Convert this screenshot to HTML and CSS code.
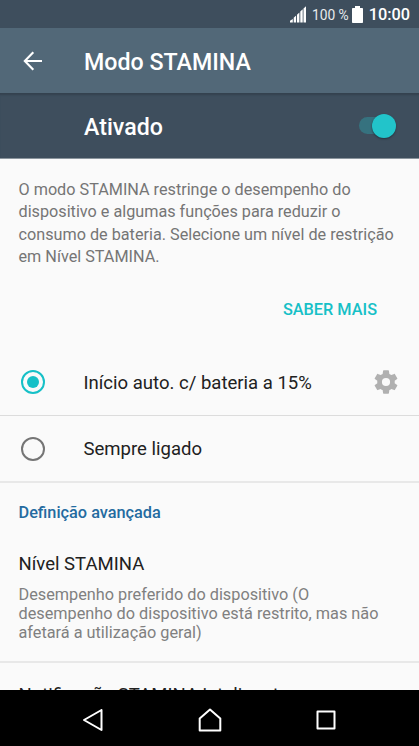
FILE: index.html
```html
<!DOCTYPE html>
<html lang="pt">
<head>
<meta charset="utf-8">
<title>Modo STAMINA</title>
<link rel="stylesheet" href="styles.css">
</head>
<body>
<div class="screen">
  <header class="status">
    <svg class="signal" width="17" height="17" viewBox="0 0 17 17" fill="#fff"><path d="M0 16.500v-1.700l2.800-1.800v3.500zM3.700 16.500v-4.700l2.400-2.300v7zM7 16.500V8.700l2.400-2.300v10.100zM10.300 16.500v-11l2.400-2.300v13.300zM13.500 16.500V2.500L16 .2v16.300z"/></svg>
    <span class="percent">100 %</span>
    <svg class="battery" width="11" height="17" viewBox="0 0 11 17" fill="#fff"><path d="M3 0h5v2h2.200q.8 0 .8.8v13.400q0 .8-.8.8H.8q-.8 0-.8-.8V2.800q0-.8.8-.8H3z"/></svg>
    <span class="clock">10:00</span>
  </header>
  <div class="appbar">
    <svg class="back" width="20" height="20" viewBox="0 0 20 20" fill="none" stroke="#fff" stroke-width="2.1"><path d="M19 10H2M10.300 1.300L1.800 10l8.500 8.700"/></svg>
    <h1 class="title">Modo STAMINA</h1>
  </div>
  <div class="switchbar">
    <span class="title">Ativado</span>
    <span class="switch"><span class="thumb"></span></span>
  </div>
  <main class="content">
    <p class="intro">O modo STAMINA restringe o desempenho do<br>dispositivo e algumas funções para reduzir o<br>consumo de bateria. Selecione um nível de restrição<br>em Nível STAMINA.</p>
    <div class="actions"><a class="more">SABER MAIS</a></div>
    <div class="option">
      <span class="radio checked"></span>
      <span class="label">Início auto. c/ bateria a 15%</span>
      <svg class="gear" width="28" height="28" viewBox="0 0 24 24" fill="#b0b0b0"><path d="M19.430 12.980c.04-.32.07-.64.07-.98s-.03-.66-.07-.98l2.110-1.650c.19-.15.24-.42.12-.64l-2-3.460c-.12-.22-.39-.3-.61-.22l-2.490 1c-.52-.4-1.080-.73-1.690-.98l-.38-2.650C14.460 2.180 14.250 2 14 2h-4c-.25 0-.46.18-.49.42l-.38 2.650c-.61.25-1.170.59-1.690.98l-2.490-1c-.23-.09-.49 0-.61.22l-2 3.460c-.13.22-.07.49.12.64l2.110 1.650c-.04.32-.07.65-.07.98s.03.66.07.98l-2.110 1.650c-.19.15-.24.42-.12.64l2 3.460c.12.22.39.3.61.22l2.490-1c.52.4 1.080.73 1.690.98l.38 2.650c.03.24.24.42.49.42h4c.25 0 .46-.18.49-.42l.38-2.650c.61-.25 1.170-.59 1.690-.98l2.490 1c.23.09.49 0 .61-.22l2-3.460c.12-.22.07-.49-.12-.64zM12 15.500a3.500 3.500 0 1 1 0-7 3.500 3.500 0 0 1 0 7z"/></svg>
    </div>
    <div class="option last">
      <span class="radio"></span>
      <span class="label">Sempre ligado</span>
    </div>
    <h2 class="section">Definição avançada</h2>
    <div class="setting">
      <div class="label">Nível STAMINA</div>
      <p class="summary">Desempenho preferido do dispositivo (O<br>desempenho do dispositivo está restrito, mas não<br>afetará a utilização geral)</p>
    </div>
    <div class="setting next">
      <div class="label">Notificação STAMINA inteligente</div>
    </div>
  </main>
  <nav class="navbar">
    <svg width="20" height="22" viewBox="0 0 20 22" fill="none" stroke="#fff" stroke-width="2" stroke-linejoin="round"><path d="M18.500 1v20L1 11z"/></svg>
    <svg width="24" height="24" viewBox="0 0 24 24" fill="none" stroke="#fff" stroke-width="2" stroke-linejoin="round"><path d="M1.700 22.500V10.500L12 1.500l10.300 9v12z"/></svg>
    <svg width="20" height="20" viewBox="0 0 20 20" fill="none" stroke="#fff" stroke-width="2" stroke-linejoin="round"><path d="M1.500 1.500h17v17h-17z"/></svg>
  </nav>
</div>
</body>
</html>
```
FILE: styles.css
```css
* { box-sizing: border-box; }
body { margin: 0; font-family: Roboto, "Liberation Sans", sans-serif; color: #212121; }
h1, h2, p { margin: 0; }
svg { display: block; flex: none; }
.screen { width: 419px; height: 746px; display: flex; flex-direction: column; overflow: hidden; background: #fafafa; }
.status { flex: none; height: 28px; background: #3e4e5d; color: #fff; display: flex; align-items: center; justify-content: flex-end; padding-right: 9px; }
.signal { margin-right: 5px; }
.percent { font-size: 13.800px; color: #e8ebed; margin-right: 3px; padding-top: 1px; }
.battery { margin-right: 6px; }
.clock { font-size: 16.300px; font-weight: 500; padding-top: 1px; }
.appbar { flex: none; height: 65px; background: #526878; display: flex; align-items: center; padding-left: 23px; }
.back { margin-right: 41px; }
.title { font-size: 23.200px; font-weight: 500; line-height: 28px; color: #fff; padding-top: 2px; }
.switchbar { flex: none; height: 66px; background: #3e4e5d; box-shadow: inset 0 3px 2px -1px #34424f; border-bottom: 1px solid #8b959d; display: flex; align-items: center; justify-content: space-between; padding: 0 23px 0 84px; }
.switchbar .title { padding-top: 3px; }
.switch { width: 37px; height: 17px; border-radius: 9px; background: #36727f; display: flex; align-items: center; justify-content: flex-end; }
.thumb { width: 24px; height: 24px; flex: none; border-radius: 50%; background: #22c4ca; box-shadow: 0 1px 2px #25333f; }
.content { flex: 1; min-height: 0; overflow: hidden; }
.intro { padding: 19.500px 0 0 18.500px; font-size: 16.220px; line-height: 22.500px; color: #757575; white-space: nowrap; }
.actions { display: flex; justify-content: flex-end; padding: 29.500px 42px 0 0; height: 80.500px; }
.more { font-size: 16.300px; line-height: 24px; font-weight: 500; color: #16c0c7; }
.option { height: 67px; display: flex; align-items: center; padding: 0 19px 0 20.500px; border-bottom: 1px solid #dcdcdc; }
.option .label { padding-top: 1px; }
.option.last { border-bottom: 2px solid #e8e8e8; }
.radio { width: 24px; height: 24px; flex: none; border: 2px solid #757575; border-radius: 50%; margin-right: 39px; display: flex; align-items: center; justify-content: center; }
.radio.checked { border-color: #16c0c7; }
.radio.checked::after { content: ""; width: 12px; height: 12px; border-radius: 50%; background: #16c0c7; }
.label { font-size: 18.550px; line-height: 24px; white-space: nowrap; }
.gear { margin-left: auto; }
.section { padding: 18px 0 0 18.500px; font-size: 16.300px; font-weight: 500; line-height: 24px; color: #246ba0; }
.setting { height: 138px; padding: 27px 0 0 18.500px; border-bottom: 2px solid #e8e8e8; }
.summary { margin-top: 9px; font-size: 16.280px; line-height: 19.100px; color: #808080; white-space: nowrap; }
.setting.next { padding-top: 20px; }
.navbar { flex: none; height: 56px; background: #000; display: flex; align-items: center; justify-content: space-between; padding: 4px 83px 0; }
```
